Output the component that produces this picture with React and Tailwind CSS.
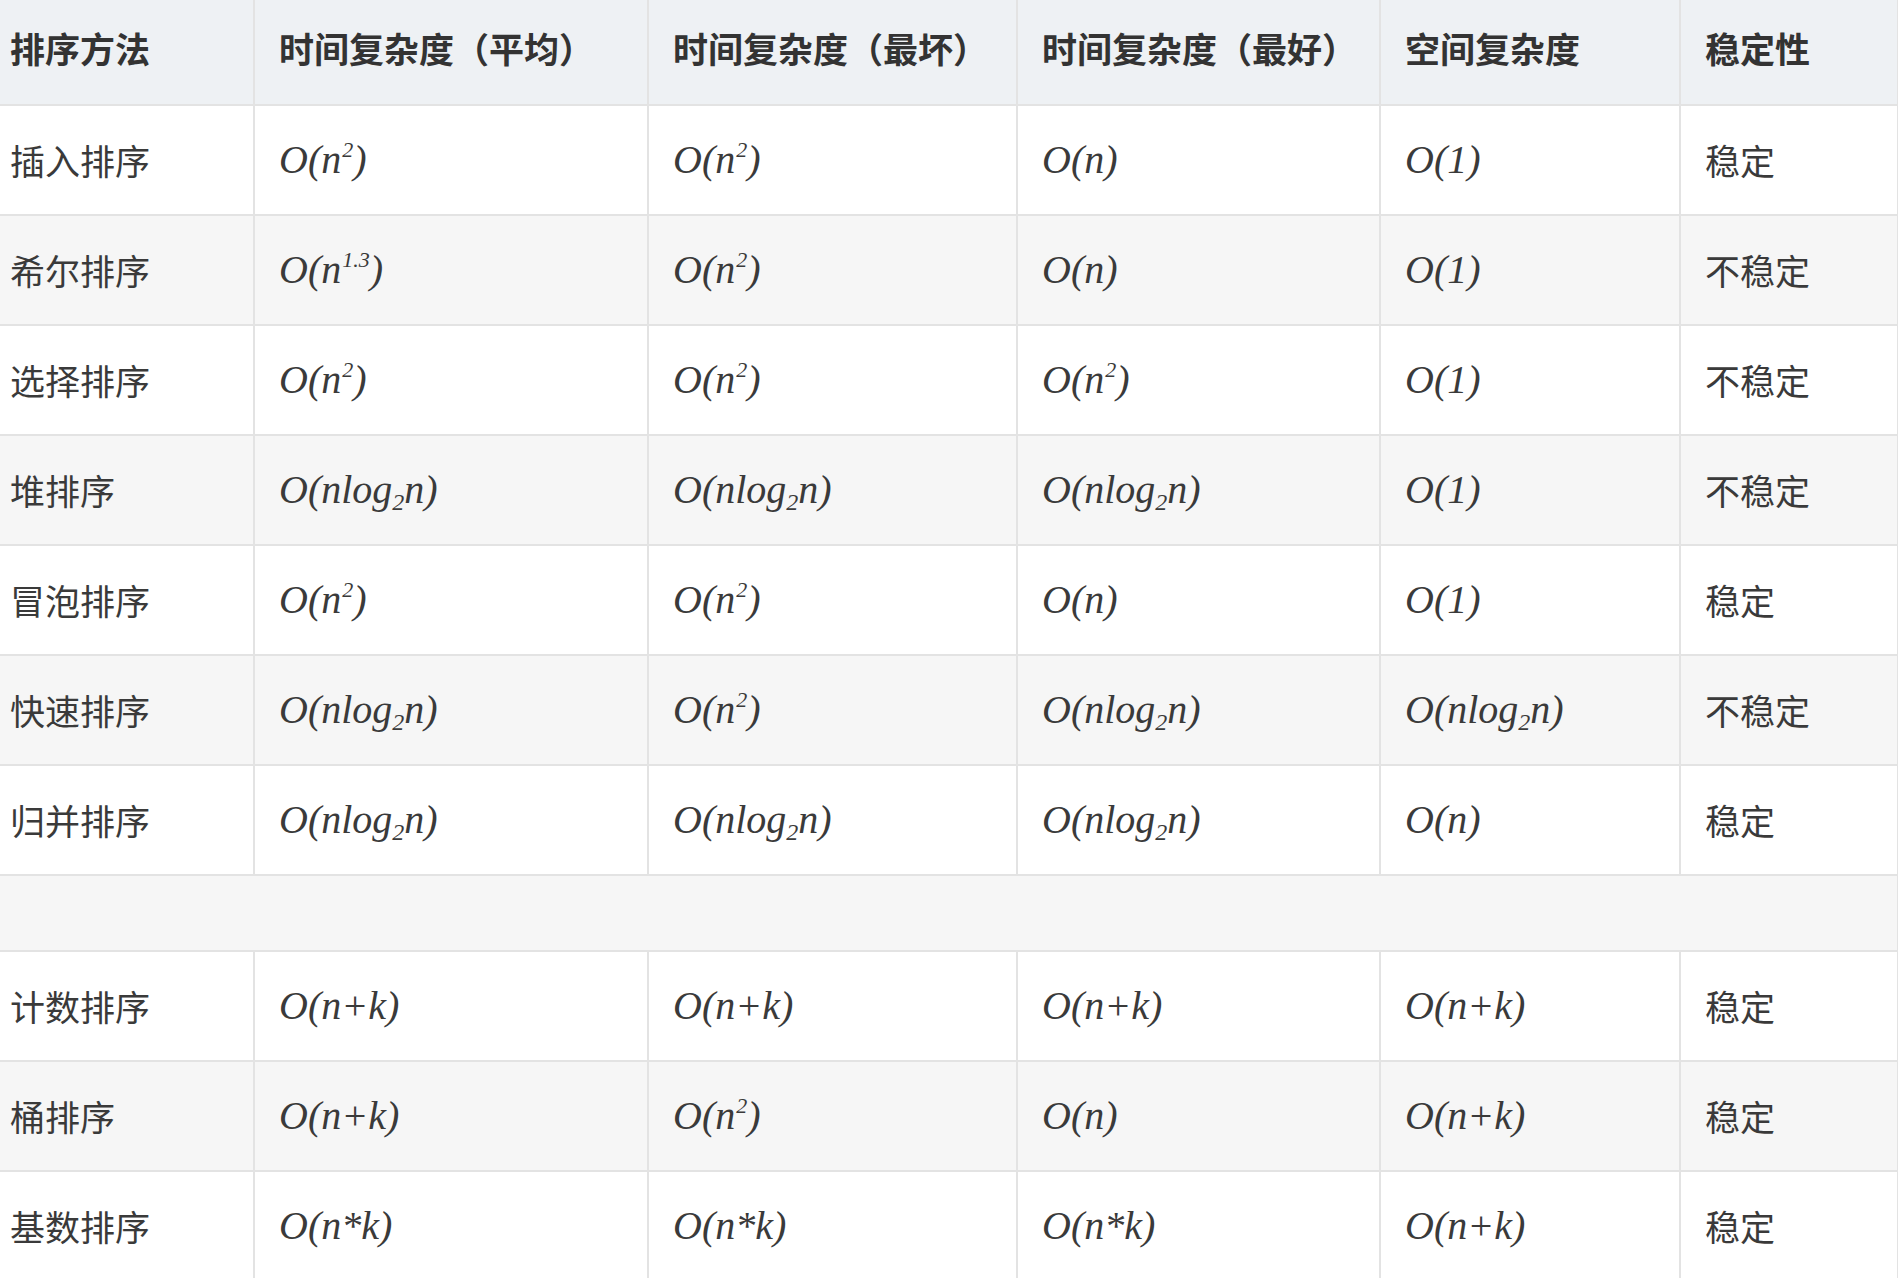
import React from "react";

const cjk = "font-['Noto_Sans_CJK_SC','Noto_Sans',sans-serif]";
const math = "font-['Liberation_Serif',serif] italic";

const Sup = ({ children }) => (
  <sup className="text-[0.55em] top-[-0.75em] ml-[1px]">{children}</sup>
);
const Sub = ({ children }) => (
  <sub className="text-[0.6em] bottom-[-0.3em]">{children}</sub>
);

const n2 = (
  <>
    O(n<Sup>2</Sup>)
  </>
);
const n13 = (
  <>
    O(n<Sup>1.3</Sup>)
  </>
);
const nlog = (
  <>
    O(nlog<Sub>2</Sub>n)
  </>
);

const rowsA = [
  ["插入排序", n2, n2, "O(n)", "O(1)", "稳定"],
  ["希尔排序", n13, n2, "O(n)", "O(1)", "不稳定"],
  ["选择排序", n2, n2, n2, "O(1)", "不稳定"],
  ["堆排序", nlog, nlog, nlog, "O(1)", "不稳定"],
  ["冒泡排序", n2, n2, "O(n)", "O(1)", "稳定"],
  ["快速排序", nlog, n2, nlog, nlog, "不稳定"],
  ["归并排序", nlog, nlog, nlog, "O(n)", "稳定"],
];

const rowsB = [
  ["计数排序", "O(n+k)", "O(n+k)", "O(n+k)", "O(n+k)", "稳定"],
  ["桶排序", "O(n+k)", n2, "O(n)", "O(n+k)", "稳定"],
  ["基数排序", "O(n*k)", "O(n*k)", "O(n*k)", "O(n+k)", "稳定"],
];

const headers = [
  "排序方法",
  "时间复杂度（平均）",
  "时间复杂度（最坏）",
  "时间复杂度（最好）",
  "空间复杂度",
  "稳定性",
];

const Row = ({ cells, shaded }) => (
  <tr className={`h-[110px] ${shaded ? "bg-[#f6f6f6]" : "bg-white"}`}>
    {cells.map((c, i) => {
      const isMath = i >= 1 && i <= 4;
      return (
        <td
          key={i}
          className={`border-[2px] border-[#e3e3e3] align-middle ${
            i === 0 ? "pl-[10px] border-l-0" : "pl-[24px]"
          } ${
            isMath
              ? `${math} text-[40px] text-[#3a3a3a]`
              : `${cjk} text-[35px] text-[#3a3a3a]`
          }`}
        >
          {c}
        </td>
      );
    })}
  </tr>
);

export default function App() {
  return (
    <div className="w-[1898px] h-[1278px] overflow-hidden bg-white">
      <table className="table-fixed border-collapse w-[1898px] -mt-[2px]">
        <colgroup>
          <col className="w-[254px]" />
          <col className="w-[394px]" />
          <col className="w-[369px]" />
          <col className="w-[363px]" />
          <col className="w-[300px]" />
          <col className="w-[218px]" />
        </colgroup>
        <thead>
          <tr className="h-[106px] bg-[#eef1f4]">
            {headers.map((h, i) => (
              <th
                key={i}
                className={`border-[2px] border-[#e3e3e3] text-left align-middle pb-[8px] font-semibold text-[35px] text-[#333] whitespace-nowrap ${cjk} ${
                  i === 0 ? "pl-[10px] border-l-0" : "pl-[24px]"
                }`}
              >
                {h}
              </th>
            ))}
          </tr>
        </thead>
        <tbody>
          {rowsA.map((r, i) => (
            <Row key={i} cells={r} shaded={i % 2 === 1} />
          ))}
          <tr className="h-[76px] bg-[#f6f6f6]">
            <td colSpan={6} className="border-[2px] border-l-0 border-[#e3e3e3]" />
          </tr>
          {rowsB.map((r, i) => (
            <Row key={i} cells={r} shaded={i % 2 === 1} />
          ))}
        </tbody>
      </table>
    </div>
  );
}
